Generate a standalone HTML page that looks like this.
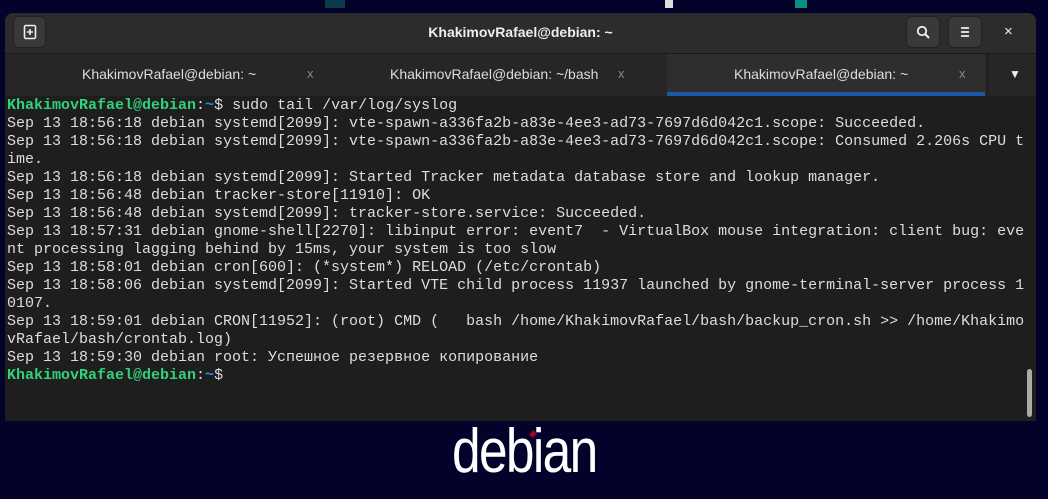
<!DOCTYPE html>
<html><head><meta charset="utf-8"><style>
body{margin:0;width:1048px;height:499px;background:#03022a;overflow:hidden;position:relative;font-family:"Liberation Sans",sans-serif}
.win{position:absolute;left:5px;top:13px;width:1031px;height:408px;background:#1e1e1e;border-radius:8px 8px 0 0;overflow:hidden}
.hdr{position:absolute;left:0;top:0;width:100%;height:40px;background:#2c2c2c;border-bottom:1px solid #1a1a1a}
.tabs{position:absolute;left:0;top:41px;width:100%;height:42px;background:#262626}
.btn{position:absolute;top:3px;width:34px;height:32px;background:#393939;border-radius:6px;border:1px solid #222;box-sizing:border-box;color:#eee;text-align:center;line-height:30px;font-size:15px}
.title{position:absolute;top:0;left:0;width:100%;text-align:center;line-height:38px;color:#eee;font-weight:bold;font-size:14px}
.tab{position:absolute;top:0;height:42px;line-height:40px;color:#ddd;font-size:14px}
.x{position:absolute;top:0;color:#888;font-size:13px;line-height:40px}
.term{position:absolute;left:2px;top:84px;font-family:"Liberation Mono",monospace;font-size:15px;line-height:18px;color:#ddd;white-space:pre}
.g{color:#33d17a;font-weight:bold}.b{color:#3584e4;font-weight:bold}
.deb{position:absolute;left:452px;top:416px;color:#fff;font-family:"Liberation Sans",sans-serif;font-size:62px;letter-spacing:-2px;transform:scaleX(0.83);transform-origin:left}
</style></head><body>
<div style="position:absolute;left:325px;top:0;width:20px;height:8px;background:#0d3b4a"></div>
<div style="position:absolute;left:795px;top:0;width:12px;height:8px;background:#0a8f7f"></div>
<div style="position:absolute;left:665px;top:0;width:8px;height:8px;background:#ddd"></div>
<div class="win">
<div class="hdr">
<div class="btn" style="left:8px;width:33px">
<svg width="14" height="16" viewBox="0 0 14 16" style="margin-top:7px"><rect x="1.5" y="1.5" width="11" height="13" rx="1.5" fill="none" stroke="#eee" stroke-width="1.6"/><path d="M7 5v6M4 8h6" stroke="#eee" stroke-width="1.6"/></svg></div>
<div class="title">KhakimovRafael@debian: ~</div>
<div class="btn" style="left:901px"><svg width="14" height="14" viewBox="0 0 14 14" style="margin-top:8px"><circle cx="6" cy="6" r="4.2" fill="none" stroke="#eee" stroke-width="1.8"/><path d="M9 9l4 4" stroke="#eee" stroke-width="2"/></svg></div>
<div class="btn" style="left:943px"><svg width="12" height="12" viewBox="0 0 12 12" style="margin-top:9px"><path d="M2 2h8M2 6h8M2 10h8" stroke="#eee" stroke-width="1.8"/></svg></div>
<div style="position:absolute;left:999px;top:0;color:#eee;font-size:15px;line-height:38px">×</div>
</div>
<div class="tabs">
<div class="tab" style="left:77px">KhakimovRafael@debian: ~</div><div class="x" style="left:302px">x</div>
<div class="tab" style="left:385px">KhakimovRafael@debian: ~/bash</div><div class="x" style="left:613px">x</div>
<div style="position:absolute;left:662px;top:0;width:318px;height:42px;background:#2e2e2e"></div>
<div class="tab" style="left:729px">KhakimovRafael@debian: ~</div><div class="x" style="left:954px">x</div>
<div style="position:absolute;left:662px;top:38px;width:318px;height:4px;background:#1c5aa6"></div>
<div style="position:absolute;left:982px;top:0;width:1px;height:42px;background:#1a1a1a"></div>
<div style="position:absolute;left:1004px;top:0;color:#eee;font-size:12px;line-height:40px">▼</div>
</div>
<div class="term"><span class="g">KhakimovRafael@debian</span>:<span class="b">~</span>$ sudo tail /var/log/syslog
Sep 13 18:56:18 debian systemd[2099]: vte-spawn-a336fa2b-a83e-4ee3-ad73-7697d6d042c1.scope: Succeeded.
Sep 13 18:56:18 debian systemd[2099]: vte-spawn-a336fa2b-a83e-4ee3-ad73-7697d6d042c1.scope: Consumed 2.206s CPU t
ime.
Sep 13 18:56:18 debian systemd[2099]: Started Tracker metadata database store and lookup manager.
Sep 13 18:56:48 debian tracker-store[11910]: OK
Sep 13 18:56:48 debian systemd[2099]: tracker-store.service: Succeeded.
Sep 13 18:57:31 debian gnome-shell[2270]: libinput error: event7  - VirtualBox mouse integration: client bug: eve
nt processing lagging behind by 15ms, your system is too slow
Sep 13 18:58:01 debian cron[600]: (*system*) RELOAD (/etc/crontab)
Sep 13 18:58:06 debian systemd[2099]: Started VTE child process 11937 launched by gnome-terminal-server process 1
0107.
Sep 13 18:59:01 debian CRON[11952]: (root) CMD (   bash /home/KhakimovRafael/bash/backup_cron.sh &gt;&gt; /home/Khakimo
vRafael/bash/crontab.log)
Sep 13 18:59:30 debian root: Успешное резервное копирование
<span class="g">KhakimovRafael@debian</span>:<span class="b">~</span>$</div>
<div style="position:absolute;left:1022px;top:356px;width:5px;height:48px;background:#aaa;border-radius:3px"></div>
</div>
<div class="deb">debian</div>
<div style="position:absolute;left:530px;top:430px;width:6px;height:8px;background:#a80030;transform:rotate(45deg) scale(0.75)"></div>
</body></html>
